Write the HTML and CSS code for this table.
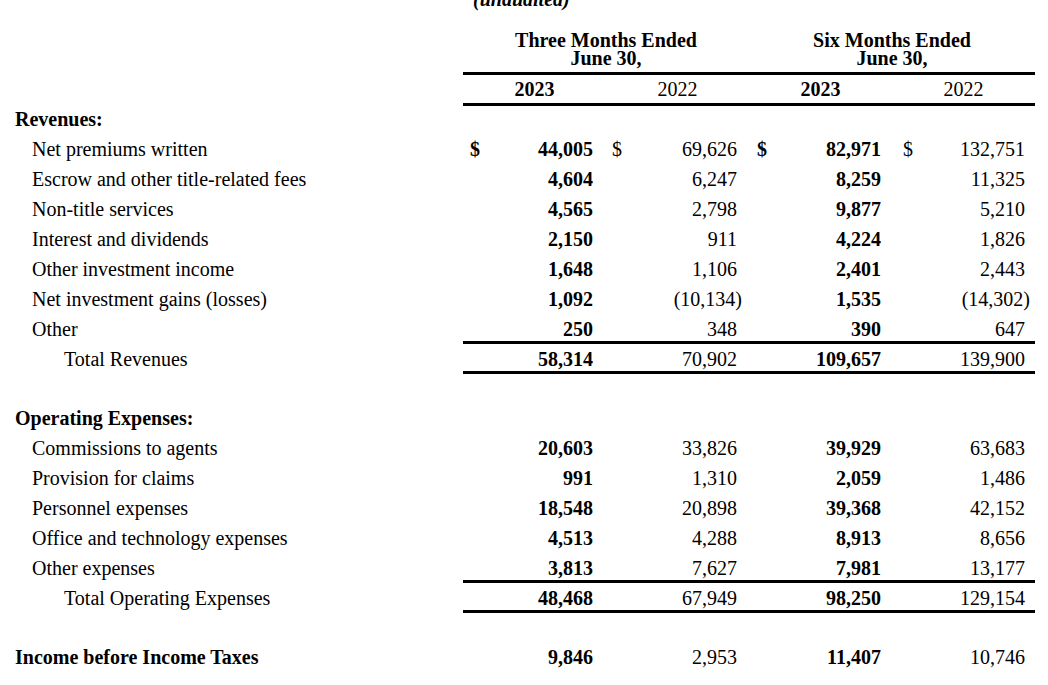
FILE: index.html
```html
<!DOCTYPE html>
<html>
<head>
<meta charset="utf-8">
<link rel="stylesheet" href="styles.css">
</head>
<body>
<div class="page">
  <div class="unaudited">(unaudited)</div>

  <div class="row head">
    <div class="label"></div>
    <div class="group"><div>Three Months Ended</div><div>June 30,</div></div>
    <div class="group"><div>Six Months Ended</div><div>June 30,</div></div>
  </div>

  <div class="row years">
    <div class="label"></div>
    <div class="yr b">2023</div>
    <div class="yr">2022</div>
    <div class="yr b">2023</div>
    <div class="yr">2022</div>
  </div>

  <div class="row"><div class="label heading">Revenues:</div><div class="num c1"></div><div class="num c2"></div><div class="num c3"></div><div class="num c4"></div></div>

  <div class="row"><div class="label item">Net premiums written</div><div class="num c1 b"><span>$</span><span>44,005</span></div><div class="num c2"><span>$</span><span>69,626</span></div><div class="num c3 b"><span>$</span><span>82,971</span></div><div class="num c4"><span>$</span><span>132,751</span></div></div>
  <div class="row"><div class="label item">Escrow and other title-related fees</div><div class="num c1 b"><span></span><span>4,604</span></div><div class="num c2"><span></span><span>6,247</span></div><div class="num c3 b"><span></span><span>8,259</span></div><div class="num c4"><span></span><span>11,325</span></div></div>
  <div class="row"><div class="label item">Non-title services</div><div class="num c1 b"><span></span><span>4,565</span></div><div class="num c2"><span></span><span>2,798</span></div><div class="num c3 b"><span></span><span>9,877</span></div><div class="num c4"><span></span><span>5,210</span></div></div>
  <div class="row"><div class="label item">Interest and dividends</div><div class="num c1 b"><span></span><span>2,150</span></div><div class="num c2"><span></span><span>911</span></div><div class="num c3 b"><span></span><span>4,224</span></div><div class="num c4"><span></span><span>1,826</span></div></div>
  <div class="row"><div class="label item">Other investment income</div><div class="num c1 b"><span></span><span>1,648</span></div><div class="num c2"><span></span><span>1,106</span></div><div class="num c3 b"><span></span><span>2,401</span></div><div class="num c4"><span></span><span>2,443</span></div></div>
  <div class="row"><div class="label item">Net investment gains (losses)</div><div class="num c1 b"><span></span><span>1,092</span></div><div class="num c2 neg"><span></span><span>(10,134)</span></div><div class="num c3 b"><span></span><span>1,535</span></div><div class="num c4 neg"><span></span><span>(14,302)</span></div></div>
  <div class="row ruled"><div class="label item">Other</div><div class="num c1 b"><span></span><span>250</span></div><div class="num c2"><span></span><span>348</span></div><div class="num c3 b"><span></span><span>390</span></div><div class="num c4"><span></span><span>647</span></div></div>
  <div class="row ruled"><div class="label total">Total Revenues</div><div class="num c1 b"><span></span><span>58,314</span></div><div class="num c2"><span></span><span>70,902</span></div><div class="num c3 b"><span></span><span>109,657</span></div><div class="num c4"><span></span><span>139,900</span></div></div>

  <div class="spacer"></div>

  <div class="row"><div class="label heading">Operating Expenses:</div><div class="num c1"></div><div class="num c2"></div><div class="num c3"></div><div class="num c4"></div></div>
  <div class="row"><div class="label item">Commissions to agents</div><div class="num c1 b"><span></span><span>20,603</span></div><div class="num c2"><span></span><span>33,826</span></div><div class="num c3 b"><span></span><span>39,929</span></div><div class="num c4"><span></span><span>63,683</span></div></div>
  <div class="row"><div class="label item">Provision for claims</div><div class="num c1 b"><span></span><span>991</span></div><div class="num c2"><span></span><span>1,310</span></div><div class="num c3 b"><span></span><span>2,059</span></div><div class="num c4"><span></span><span>1,486</span></div></div>
  <div class="row"><div class="label item">Personnel expenses</div><div class="num c1 b"><span></span><span>18,548</span></div><div class="num c2"><span></span><span>20,898</span></div><div class="num c3 b"><span></span><span>39,368</span></div><div class="num c4"><span></span><span>42,152</span></div></div>
  <div class="row"><div class="label item">Office and technology expenses</div><div class="num c1 b"><span></span><span>4,513</span></div><div class="num c2"><span></span><span>4,288</span></div><div class="num c3 b"><span></span><span>8,913</span></div><div class="num c4"><span></span><span>8,656</span></div></div>
  <div class="row ruled"><div class="label item">Other expenses</div><div class="num c1 b"><span></span><span>3,813</span></div><div class="num c2"><span></span><span>7,627</span></div><div class="num c3 b"><span></span><span>7,981</span></div><div class="num c4"><span></span><span>13,177</span></div></div>
  <div class="row ruled"><div class="label total">Total Operating Expenses</div><div class="num c1 b"><span></span><span>48,468</span></div><div class="num c2"><span></span><span>67,949</span></div><div class="num c3 b"><span></span><span>98,250</span></div><div class="num c4"><span></span><span>129,154</span></div></div>

  <div class="spacer"></div>

  <div class="row"><div class="label heading">Income before Income Taxes</div><div class="num c1 b"><span></span><span>9,846</span></div><div class="num c2"><span></span><span>2,953</span></div><div class="num c3 b"><span></span><span>11,407</span></div><div class="num c4"><span></span><span>10,746</span></div></div>
</div>
</body>
</html>
```

FILE: styles.css
```css
html, body {
  margin: 0;
  padding: 0;
  background: #ffffff;
}

body {
  font-family: "Liberation Serif", "Times New Roman", serif;
  font-size: 20px;
  color: #000000;
  overflow: hidden;
}

.page {
  width: 1048px;
}

.unaudited {
  margin-top: -10px;
  height: 19px;
  line-height: 19px;
  padding-left: 473px;
  font-weight: bold;
  font-style: italic;
}

.row {
  display: grid;
  grid-template-columns: 463px repeat(4, 143px);
  height: 30px;
  line-height: 30px;
  box-sizing: border-box;
}

.head {
  height: 66px;
}

.head .group {
  grid-column: span 2;
  text-align: center;
  font-weight: bold;
  padding: 22px 0 5px;
  border-bottom: 3px solid #000;
  display: flex;
  flex-direction: column;
  line-height: 18px;
}

.head .group div {
  height: 18px;
}

.years {
  height: 29px;
}

.yr {
  text-align: center;
  border-bottom: 3px solid #000;
  line-height: 28px;
}

.b {
  font-weight: bold;
}

.label {
  white-space: nowrap;
}

.heading {
  padding-left: 15px;
  font-weight: bold;
}

.item {
  padding-left: 32px;
}

.total {
  padding-left: 64px;
}

.num {
  display: flex;
  justify-content: space-between;
  box-sizing: border-box;
}

.c1 { padding: 0 13px 0 7px; }
.c2 { padding: 0 12px 0 6px; }
.c3 { padding: 0 11px 0 8px; }
.c4 { padding: 0 10px 0 11px; }

.neg span:last-child {
  margin-right: -5px;
}

.ruled .num {
  border-bottom: 3px solid #000;
  line-height: 30px;
  height: 30px;
}

.spacer {
  height: 29px;
}
```
